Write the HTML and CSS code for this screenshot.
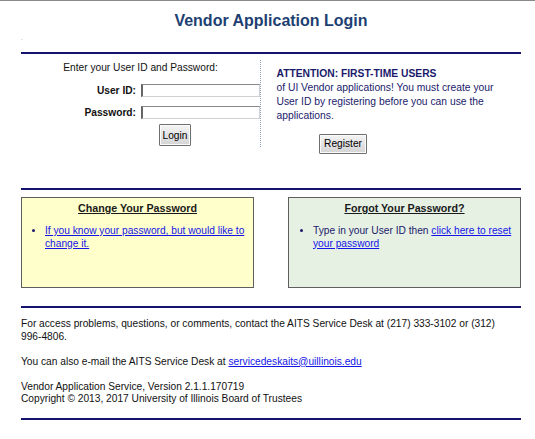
FILE: index.html
```html
<!DOCTYPE html>
<html>
<head>
<meta charset="utf-8">
<title>Vendor Application Login</title>
<link rel="stylesheet" href="styles.css">
</head>
<body>
<div class="page">
  <h1 class="title">Vendor Application Login</h1>
  <div class="dot">.</div>
  <hr class="rule">
  <div class="login">
    <div class="login-left">
      <div class="prompt">Enter your User ID and Password:</div>
      <div class="field field-first">
        <label class="lbl">User ID:</label>
        <input class="inp" type="text">
      </div>
      <div class="field">
        <label class="lbl">Password:</label>
        <input class="inp" type="password">
      </div>
      <div class="btn-row-login"><button class="btn btn-login">Login</button></div>
    </div>
    <div class="login-right">
      <div class="attn">ATTENTION: FIRST-TIME USERS</div>
      <div class="attn-text">of UI Vendor applications! You must create your User ID by registering before you can use the applications.</div>
      <div class="btn-row-reg"><button class="btn btn-reg">Register</button></div>
    </div>
  </div>
  <hr class="rule">
  <div class="boxes">
    <div class="box box-yellow">
      <div class="box-title">Change Your Password</div>
      <ul class="box-list">
        <li><a href="#">If you know your password, but would like to change it.</a></li>
      </ul>
    </div>
    <div class="box box-green">
      <div class="box-title">Forgot Your Password?</div>
      <ul class="box-list">
        <li>Type in your User ID then <a href="#">click here to reset your password</a></li>
      </ul>
    </div>
  </div>
  <hr class="rule">
  <div class="footer">
    <p class="fp fp-first">For access problems, questions, or comments, contact the AITS Service Desk at (217) 333-3102 or (312) 996-4806.</p>
    <p class="fp">You can also e-mail the AITS Service Desk at <a href="#">servicedeskaits@uillinois.edu</a></p>
    <p class="fp">Vendor Application Service, Version 2.1.1.170719<br>Copyright © 2013, 2017 University of Illinois Board of Trustees</p>
  </div>
  <hr class="rule">
</div>
</body>
</html>
```
FILE: styles.css
```css
html, body {
  margin: 0;
  padding: 0;
  background: #fff;
}
body {
  border-top: 1px solid #8a8a8a;
  font-family: "Liberation Sans", Arial, sans-serif;
  font-size: 10.2px;
  color: #111;
}
.page {
  width: 500px;
  margin-left: 21px;
}
.title {
  margin: 0;
  padding-top: 8.5px;
  height: 21.5px;
  text-align: center;
  font-size: 16px;
  line-height: 21px;
  font-weight: bold;
  color: #1d3f72;
}
.dot {
  height: 21px;
  font-size: 6px;
  line-height: 8px;
  padding-top: 3px;
  color: #777;
  box-sizing: border-box;
}
.rule {
  margin: 0;
  border: 0;
  height: 2px;
  background: #14146e;
}
.login {
  display: flex;
  margin-top: 6px;
  height: 128px;
}
.login-left {
  width: 240px;
  height: 87px;
  padding-top: 1px;
  border-right: 1px dotted #8fa3c4;
  box-sizing: border-box;
}
.prompt {
  text-align: center;
  line-height: 13px;
}
.field {
  display: flex;
  align-items: center;
  height: 13px;
  margin-top: 9px;
}
.field-first {
  margin-top: 10px;
}
.lbl {
  width: 120px;
  padding-right: 5px;
  box-sizing: border-box;
  text-align: right;
  font-weight: bold;
}
.inp {
  width: 119px;
  height: 13px;
  box-sizing: border-box;
  margin: 0;
  padding: 0;
  border: 1px solid #d0d0d0;
  border-top-color: #888;
  border-left: 2px solid #666;
  background: #fff;
}
.btn {
  font-family: "Liberation Sans", Arial, sans-serif;
  font-size: 10.2px;
  color: #000;
  background: linear-gradient(#f4f4f4, #d4d4d4);
  border: 1px solid #6f6f6f;
  border-radius: 1px;
  box-shadow: inset 0 0 0 1px #fbfbfb;
  margin: 0;
  box-sizing: border-box;
}
.btn-login {
  width: 32px;
  height: 22px;
  padding: 0;
}
.btn-row-login {
  margin-top: 5px;
  padding-left: 138px;
  line-height: 0;
}
.login-right {
  width: 260px;
  padding: 6.5px 12px 0 15.5px;
  box-sizing: border-box;
  color: #1a1a6b;
  font-size: 10.3px;
  line-height: 14.3px;
}
.attn {
  font-weight: bold;
}
.btn-row-reg {
  margin-top: 10.3px;
  padding-left: 42.5px;
  line-height: 0;
}
.btn-reg {
  width: 48px;
  height: 20px;
  padding: 0;
}
.boxes {
  display: flex;
  justify-content: space-between;
  margin-top: 7px;
  margin-bottom: 18px;
}
.box {
  width: 233px;
  height: 91px;
  box-sizing: border-box;
  border: 1px solid #5e5e5e;
}
.box-yellow {
  background: #ffffcc;
}
.box-green {
  background: #e6f1e4;
}
.box-title {
  padding-top: 4px;
  text-align: center;
  text-decoration: underline;
  font-size: 10.7px;
  font-weight: bold;
  line-height: 13px;
  color: #1a1a1a;
}
.box-list {
  margin: 10px 0 0 0;
  padding: 0 5px 0 23px;
  line-height: 12.5px;
  color: #1a1a6b;
}
.box-green .box-list {
  padding-left: 24px;
  padding-right: 3px;
}
.box-list li {
  list-style: disc;
}
.box-list a {
  color: #1414e6;
}
.footer {
  padding-top: 10px;
  padding-bottom: 12px;
}
.fp {
  margin: 0 0 12.5px 0;
  line-height: 12.5px;
}
.fp-first {
  max-width: 492px;
}
.fp:last-child {
  margin-bottom: 0;
}
.fp a {
  color: #1414e6;
}
```
